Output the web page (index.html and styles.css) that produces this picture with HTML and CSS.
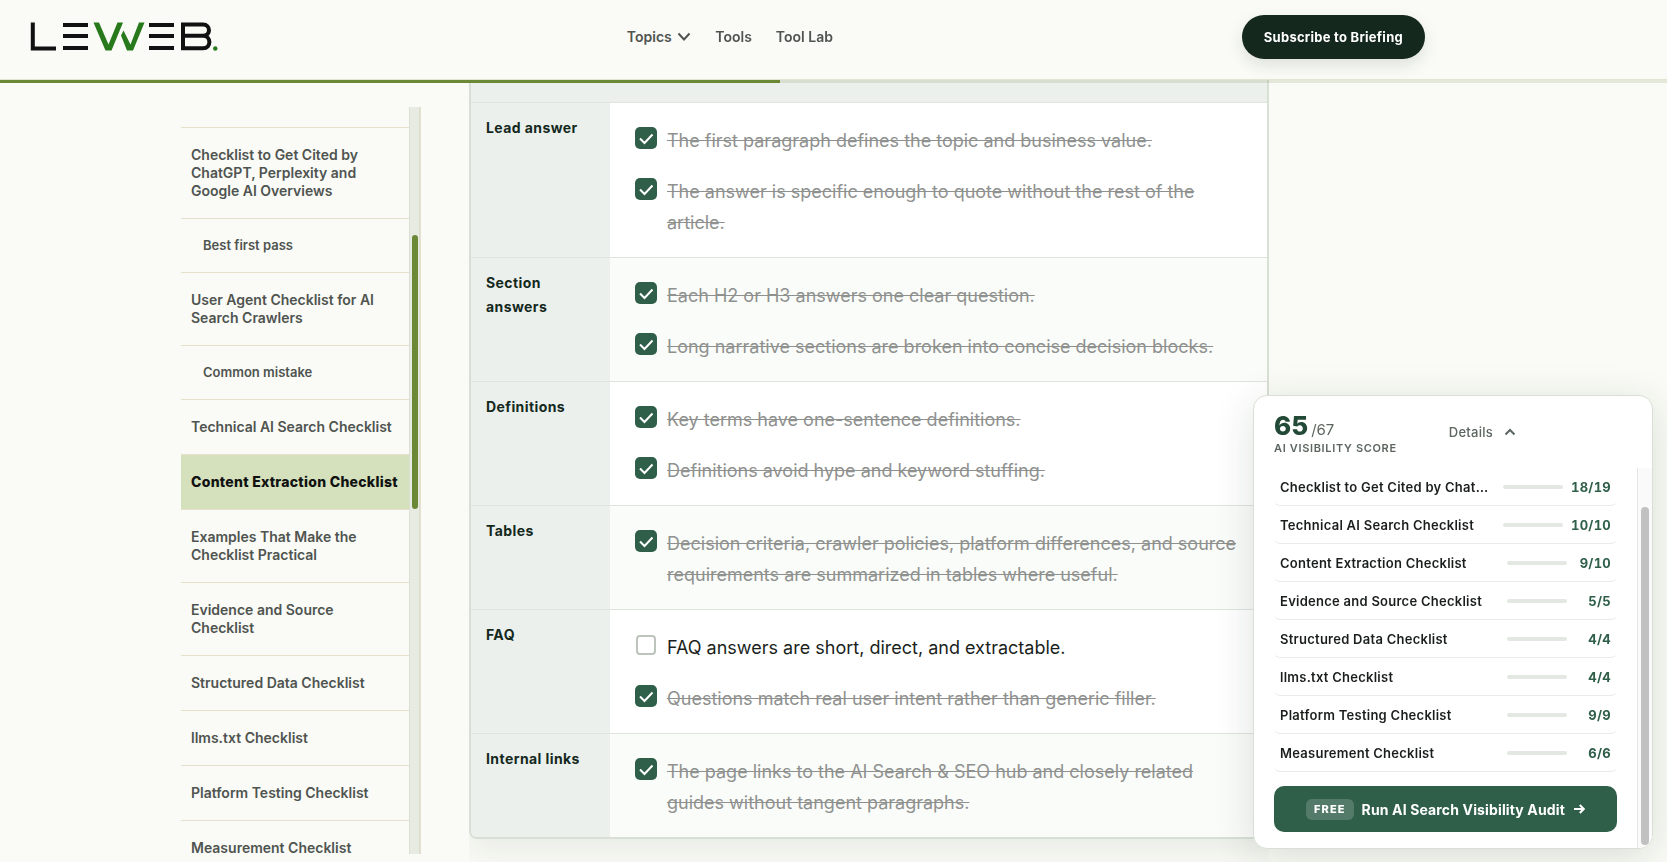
FILE: index.html
```
<!DOCTYPE html>
<html lang="en">
<head>
    <meta charset="UTF-8">
    <meta name="viewport" content="width=device-width, initial-scale=1.0">
    <title>AI Search Checklist | LEWEB</title>
    <link rel="stylesheet" href="styles.css">
</head>
<body>
    <header class="site-header">
        <div class="header-inner">
            <a class="logo" href="#" aria-label="Leweb">
                <svg width="188" height="30" viewBox="0 0 188 30">
                    <path d="M2.8 .5V26.4H26" fill="none" stroke="#111" stroke-width="4"/>
                    <path d="M33 3H58M33 14H58M33 26H58M119 3H144M119 14H144M119 26H144" stroke="#111" stroke-width="4"/>
                    <path d="M63.500 .5H69L78.500 22.500L87.500 .5H93L81.500 28.500H75.500ZM93.500 8.500L100.500 22.500L109 .5H114.500L103 28.500H97L91 13.500Z" fill="#27791b"/>
                    <path d="M153 2.600H173C181 2.600 181 13.800 173 13.800H153M173 13.800C181.500 13.800 181.500 26.300 173 26.300H153V.6" fill="none" stroke="#111" stroke-width="4"/>
                    <circle cx="185.300" cy="26.500" r="2.200" fill="#27791b"/>
                </svg>
            </a>
            <nav class="main-nav" aria-label="Main">
                <a href="#">Topics
                    <svg width="14" height="10" viewBox="0 0 14 10"><path d="M1.500 1.500L7 7.500L12.500 1.500" fill="none" stroke="currentColor" stroke-width="2"/></svg>
                </a>
                <a href="#">Tools</a>
                <a href="#">Tool Lab</a>
            </nav>
            <button class="subscribe" type="button">Subscribe to Briefing</button>
        </div>
        <div class="progress"><div class="progress-fill" style="width: 46.8%"></div></div>
    </header>

    <div class="page">
        <aside class="toc">
            <nav class="toc-view" aria-label="Table of contents">
                <ul class="toc-list">
                    <li><a href="#">Checklist to Get Cited by ChatGPT, Perplexity and Google AI Overviews</a></li>
                    <li class="sub"><a href="#">Best first pass</a></li>
                    <li><a href="#">User Agent Checklist for AI Search Crawlers</a></li>
                    <li class="sub"><a href="#">Common mistake</a></li>
                    <li><a href="#">Technical AI Search Checklist</a></li>
                    <li class="active"><a href="#">Content Extraction Checklist</a></li>
                    <li><a href="#">Examples That Make the Checklist Practical</a></li>
                    <li><a href="#">Evidence and Source Checklist</a></li>
                    <li><a href="#">Structured Data Checklist</a></li>
                    <li><a href="#">llms.txt Checklist</a></li>
                    <li><a href="#">Platform Testing Checklist</a></li>
                    <li><a href="#">Measurement Checklist</a></li>
                </ul>
            </nav>
            <div class="toc-rail"><div class="toc-thumb"></div></div>
        </aside>

        <main class="article">
            <table class="checks">
                <thead>
                    <tr><td colspan="2"></td></tr>
                </thead>
                <tbody>
                    <tr>
                        <th scope="row">Lead answer</th>
                        <td>
                            <label><input type="checkbox" checked><span>The first paragraph defines the topic and business value.</span></label>
                            <label><input type="checkbox" checked><span>The answer is specific enough to quote without the rest of the article.</span></label>
                        </td>
                    </tr>
                    <tr>
                        <th scope="row">Section answers</th>
                        <td>
                            <label><input type="checkbox" checked><span>Each H2 or H3 answers one clear question.</span></label>
                            <label><input type="checkbox" checked><span>Long narrative sections are broken into concise decision blocks.</span></label>
                        </td>
                    </tr>
                    <tr>
                        <th scope="row">Definitions</th>
                        <td>
                            <label><input type="checkbox" checked><span>Key terms have one-sentence definitions.</span></label>
                            <label><input type="checkbox" checked><span>Definitions avoid hype and keyword stuffing.</span></label>
                        </td>
                    </tr>
                    <tr>
                        <th scope="row">Tables</th>
                        <td>
                            <label><input type="checkbox" checked><span>Decision criteria, crawler policies, platform differences, and source requirements are summarized in tables where useful.</span></label>
                        </td>
                    </tr>
                    <tr>
                        <th scope="row">FAQ</th>
                        <td>
                            <label><input type="checkbox"><span>FAQ answers are short, direct, and extractable.</span></label>
                            <label><input type="checkbox" checked><span>Questions match real user intent rather than generic filler.</span></label>
                        </td>
                    </tr>
                    <tr>
                        <th scope="row">Internal links</th>
                        <td>
                            <label><input type="checkbox" checked><span>The page links to the AI Search &amp; SEO hub and closely related guides without tangent paragraphs.</span></label>
                        </td>
                    </tr>
                </tbody>
            </table>
        </main>
    </div>

    <section class="score-panel" aria-label="AI visibility score">
        <div class="score-head">
            <div class="score-block">
                <div class="score"><strong>65</strong><span>/67</span></div>
                <div class="score-label">AI VISIBILITY SCORE</div>
            </div>
            <button class="details" type="button">Details
                <svg width="12" height="8" viewBox="0 0 12 8"><path d="M1.500 6.500L6 2L10.500 6.500" fill="none" stroke="currentColor" stroke-width="2"/></svg>
            </button>
        </div>
        <div class="score-scroll">
            <div class="score-body">
                <ul class="score-list">
                    <li><a href="#">Checklist to Get Cited by Chat…</a><i></i><b>18/19</b></li>
                    <li><a href="#">Technical AI Search Checklist</a><i></i><b>10/10</b></li>
                    <li><a href="#">Content Extraction Checklist</a><i></i><b>9/10</b></li>
                    <li><a href="#">Evidence and Source Checklist</a><i></i><b>5/5</b></li>
                    <li><a href="#">Structured Data Checklist</a><i></i><b>4/4</b></li>
                    <li><a href="#">llms.txt Checklist</a><i></i><b>4/4</b></li>
                    <li><a href="#">Platform Testing Checklist</a><i></i><b>9/9</b></li>
                    <li><a href="#">Measurement Checklist</a><i></i><b>6/6</b></li>
                </ul>
                <button class="audit" type="button">
                    <span class="free">FREE</span>
                    <span>Run AI Search Visibility Audit</span>
                    <svg width="12" height="12" viewBox="0 0 12 12"><path d="M1 6H10.500M6.800 2L10.800 6L6.800 10" fill="none" stroke="currentColor" stroke-width="2"/></svg>
                </button>
            </div>
            <div class="score-rail"><div class="score-thumb"></div></div>
        </div>
    </section>
</body>
</html>
```
FILE: styles.css
```
* {
    box-sizing: border-box;
}
body {
    margin: 0;
    background: #fafbf6;
    color: #1a1f1c;
    font-family: Inter, "Liberation Sans", sans-serif;
}
a {
    color: inherit;
    text-decoration: none;
}
button {
    font-family: inherit;
    border: 0;
    cursor: pointer;
}
ul {
    list-style: none;
    margin: 0;
    padding: 0;
}

/* header */
.site-header {
    position: fixed;
    top: 0;
    left: 0;
    right: 0;
    z-index: 10;
}
.header-inner {
    display: flex;
    align-items: center;
    justify-content: space-between;
    height: 80px;
    padding: 0 242px 6px 30px;
    background: #fafbf6;
    border-bottom: 1px solid #e5e4d3;
}
.logo svg {
    display: block;
}
.main-nav {
    display: flex;
    gap: 24px;
    font-size: 14px;
    font-weight: 600;
    color: #4f5450;
}
.main-nav svg {
    margin-left: 2px;
}
.subscribe {
    height: 44px;
    padding: 0 22px;
    border-radius: 22px;
    background: #14281d;
    color: #fff;
    font-size: 13px;
    font-weight: 700;
    letter-spacing: 0.02em;
    box-shadow: 0 6px 16px rgba(20, 40, 29, 0.12);
}
.progress {
    height: 3px;
    background: rgba(106, 126, 54, 0.15);
}
.progress-fill {
    height: 3px;
    background: #6a8836;
}

/* layout */
.page {
    display: grid;
    grid-template-columns: 240px minmax(0, 800px);
    gap: 48px;
    align-items: start;
    min-height: 100vh;
    padding: 80px 48px 0 181px;
}

/* table of contents */
.toc {
    position: sticky;
    top: 107px;
    display: flex;
    height: calc(100vh - 115px);
    margin-top: 27px;
    border-right: 1px solid #e9e0cc;
}
.toc-view {
    flex: 1;
    overflow: hidden;
}
.toc-list {
    margin-top: 20px;
    border-top: 1px solid #e8e0cd;
}
.toc-list li {
    border-bottom: 1px solid #e8e0cd;
}
.toc-list a {
    display: block;
    padding: 18px 10px;
    font-size: 14px;
    line-height: 18px;
    font-weight: 600;
    color: #4f5450;
}
.toc-list .sub a {
    padding-left: 22px;
    font-size: 13px;
    line-height: 17px;
}
.toc-list .active a {
    padding-right: 0;
    background: #d4e1bc;
    color: #111;
    font-weight: 800;
    letter-spacing: 0.02em;
}
.toc-rail {
    width: 11px;
    padding: 128px 2px 0;
    background: #e7ebe1;
    border-left: 1px solid #dadfd4;
    border-right: 1px solid #dadfd4;
}
.toc-thumb {
    width: 6px;
    height: 274px;
    border-radius: 3px;
    background: #6a8836;
}

/* checklist table */
.article {
    overflow: hidden;
    padding-bottom: 24px;
}
.checks {
    width: 100%;
    border: 2px solid #d8e0d5;
    border-top: 0;
    border-radius: 0 0 8px 8px;
    border-spacing: 0;
    background: #fff;
    box-shadow: 0 12px 32px rgba(20, 40, 29, 0.08);
    overflow: hidden;
}
.checks thead td {
    height: 23px;
    padding: 0;
    background: #ebf0ec;
    border-bottom: 1px solid #dfe4df;
}
.checks th {
    width: 139px;
    padding: 13px 15px;
    background: #ebf0ec;
    color: #14281d;
    font-size: 14px;
    line-height: 24px;
    font-weight: 700;
    letter-spacing: 0.03em;
    text-align: left;
    vertical-align: top;
}
.checks tbody td {
    padding: 22px 26px 19px;
    vertical-align: top;
}
.checks tbody tr:nth-child(even) td {
    background: #fafcf9;
}
.checks tbody tr:not(:last-child) > * {
    border-bottom: 1px solid #dfe4df;
}
.checks label {
    display: flex;
    gap: 11px;
    font-size: 18px;
    line-height: 31px;
}
.checks label + label {
    margin-top: 20px;
}
.checks input {
    appearance: none;
    flex: none;
    width: 20px;
    height: 20px;
    margin: 3px 0 0;
    border: 2px solid #bcc4bc;
    border-radius: 4px;
    background: #fff;
}
.checks input:checked {
    border-color: #2f5f49;
    background: #2f5f49 url("data:image/svg+xml,%3Csvg xmlns='http://www.w3.org/2000/svg' viewBox='0 0 16 16'%3E%3Cpath d='M2 8.500L6.500 13L14.500 4.500' fill='none' stroke='white' stroke-width='2'/%3E%3C/svg%3E") center / 16px no-repeat;
    box-shadow: 0 0 0 1px #2f5f49;
}
.checks input:checked + span {
    color: #8f918f;
    text-decoration: line-through;
}

/* floating score panel */
.score-panel {
    position: fixed;
    right: 14px;
    bottom: 13px;
    z-index: 5;
    width: 400px;
    border: 1px solid #d8e0d5;
    border-radius: 14px;
    background: #fff;
    box-shadow: 0 8px 40px rgba(20, 40, 29, 0.14);
    overflow: hidden;
}
.score-head {
    display: flex;
    align-items: center;
    gap: 52px;
    height: 72px;
    padding: 0 20px;
}
.score-block {
    padding-top: 4px;
}
.score {
    display: flex;
    align-items: baseline;
    gap: 3px;
    line-height: 24px;
    color: #5c665f;
    font-size: 15px;
}
.score strong {
    font-size: 26px;
    font-weight: 800;
    color: #234a36;
}
.score-label {
    font-size: 11px;
    line-height: 12px;
    font-weight: 600;
    letter-spacing: 0.06em;
    color: #5c665f;
}
.details {
    display: flex;
    align-items: center;
    gap: 11px;
    padding: 0;
    background: none;
    color: #5c665f;
    font-size: 13px;
    font-weight: 500;
    letter-spacing: 0.02em;
}
.score-scroll {
    display: flex;
}
.score-body {
    flex: 1;
    min-width: 0;
    padding: 0 20px 16px;
}
.score-list li {
    display: flex;
    align-items: center;
    gap: 8px;
    height: 38px;
    padding: 0 6px;
    border-bottom: 1px solid #e9ecea;
    border-radius: 6px;
    font-size: 13px;
    letter-spacing: 0.02em;
}
.score-list a {
    flex: 1;
    font-weight: 600;
    white-space: nowrap;
}
.score-list i {
    width: 60px;
    height: 4px;
    border-radius: 2px;
    background: #e4e8e2;
}
.score-list b {
    min-width: 36px;
    text-align: right;
    font-variant-numeric: tabular-nums;
    color: #2f5f49;
}
.audit {
    display: flex;
    align-items: center;
    justify-content: center;
    gap: 8px;
    width: 100%;
    height: 46px;
    margin-top: 14px;
    border-radius: 10px;
    background: #2f5f49;
    color: #fff;
    font-size: 14px;
    font-weight: 700;
    letter-spacing: 0.01em;
}
.free {
    padding: 0 8px;
    border-radius: 6px;
    background: rgba(255, 255, 255, 0.18);
    font-size: 11px;
    line-height: 21px;
    font-weight: 800;
    letter-spacing: 0.1em;
}
.score-rail {
    width: 15px;
    padding: 39px 3px 3px;
    background: #fafafa;
    border-left: 1px solid #e6e6e6;
}
.score-thumb {
    width: 8px;
    height: 100%;
    border-radius: 4px;
    background: #c1c1c1;
}
```
